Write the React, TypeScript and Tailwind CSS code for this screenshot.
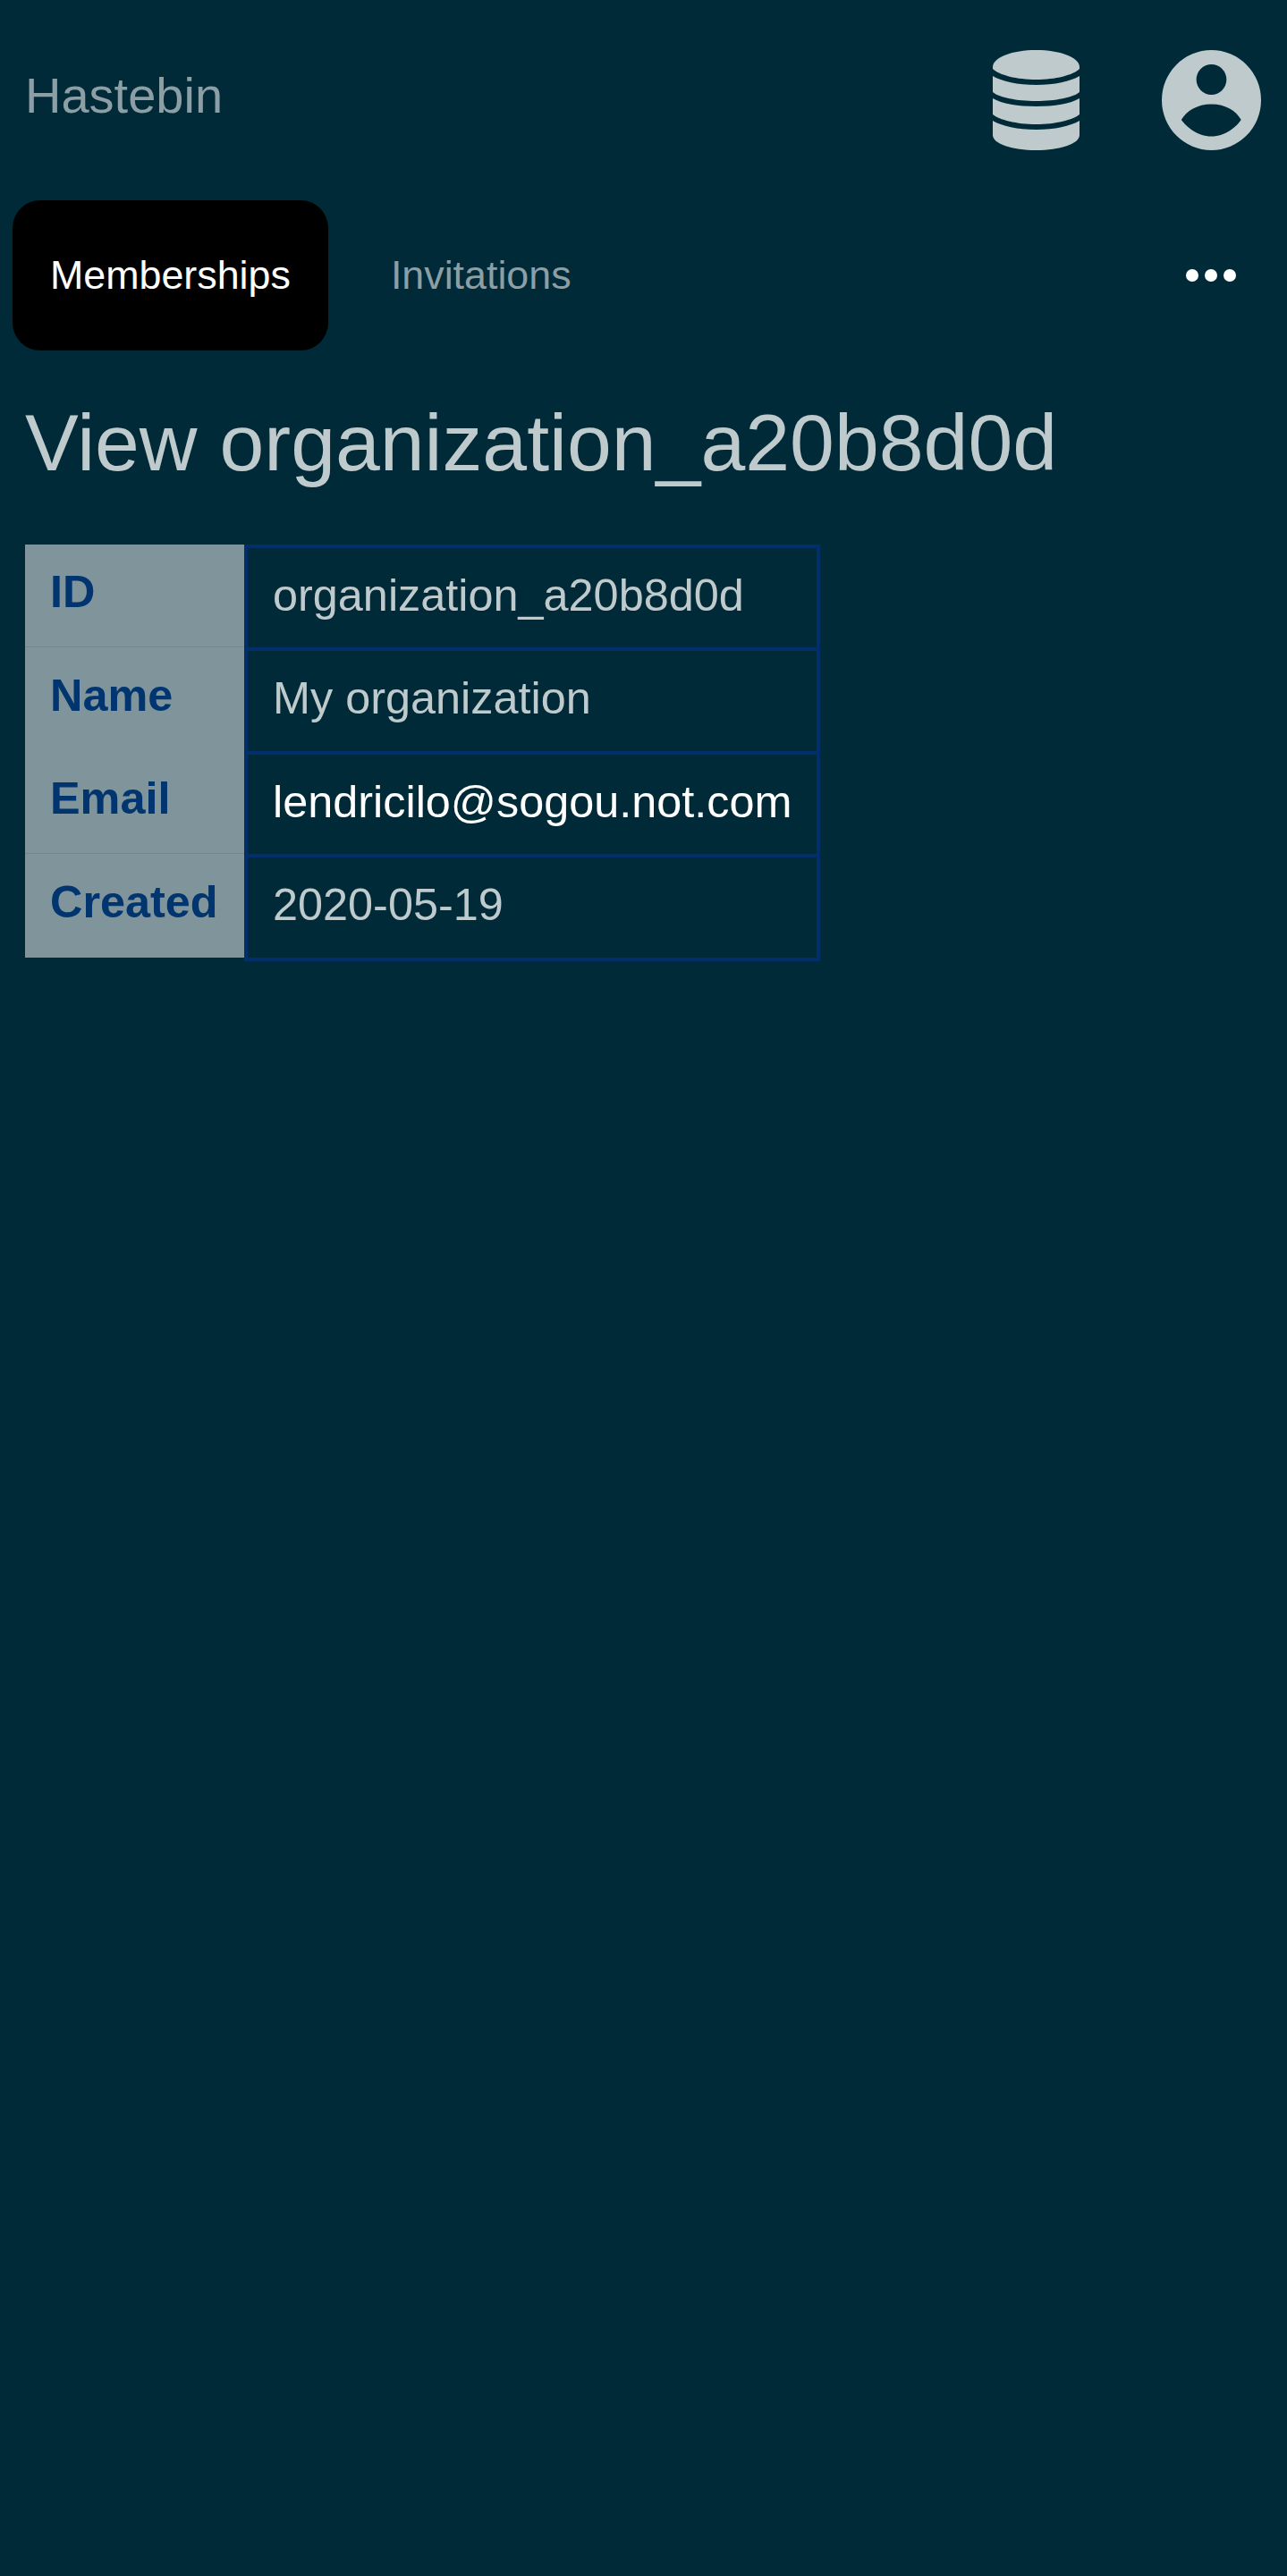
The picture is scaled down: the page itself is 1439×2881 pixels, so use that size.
const rows = [
  { label: "ID", value: "organization_a20b8d0d", height: "h-[115px] pt-[23px]", line: "border-b border-[#73878e]", cell: "h-[115px]" },
  { label: "Name", value: "My organization", height: "h-[116px] pt-[24px]", line: "", cell: "h-[116px]" },
  { label: "Email", value: "lendricilo@sogou.not.com", height: "h-[115px] pt-[23px]", line: "border-b border-[#73878e]", cell: "h-[115px]", link: true },
  { label: "Created", value: "2020-05-19", height: "h-[116px] pt-[24px]", line: "", cell: "h-[112px]" },
];

function DatabaseIcon() {
  return (
    <svg viewBox="0 0 97 112" className="h-[112px] w-[97px] fill-[#bfcacd]">
      <path d="M0 19C0 8 22 0 48.500 0S97 8 97 19V21C90 28 70 33 48.500 33S7 28 0 21Z" />
      <path d="M0 29C10 35 28 39 48.500 39S87 35 97 29V47C90 53 70 57 48.500 57S7 53 0 47Z" />
      <path d="M0 54C10 60 28 63 48.500 63S87 60 97 54V72C90 78 70 83 48.500 83S7 78 0 72Z" />
      <path d="M0 79C10 85 28 89 48.500 89S87 85 97 79V95C97 105 75 112 48.500 112S0 105 0 95Z" />
    </svg>
  );
}

function UserIcon() {
  return (
    <svg viewBox="0 0 112 112" preserveAspectRatio="none" className="h-[112px] w-[111px] fill-[#bfcacd]">
      <path
        fillRule="evenodd"
        d="M56 0A56 56 0 1 1 56 112A56 56 0 1 1 56 0ZM56 16A17 17 0 1 0 56 50A17 17 0 1 0 56 16ZM22 78C28 86 40 96.500 56 96.500S84 86 89.500 78C84 68 72 60.500 56 60.500S28 68 22 78Z"
      />
    </svg>
  );
}

function DotsIcon() {
  return (
    <svg viewBox="0 0 56 14" className="h-[14px] w-[56px] fill-white">
      <circle cx="7" cy="7" r="7" />
      <circle cx="28" cy="7" r="7" />
      <circle cx="49" cy="7" r="7" />
    </svg>
  );
}

export default function App() {
  return (
    <div className="min-h-screen bg-[#002a38] [font-family:'Liberation_Sans',sans-serif] leading-[normal] text-[#bfcacd]">
      {/* Header */}
      <header className="flex items-center justify-between pl-[28px] pr-[29px] py-[56px]">
        <a className="mb-[12px] text-[56px] text-[#8c9fa5]">Hastebin</a>
        <div className="flex items-center gap-[92px]">
          <DatabaseIcon />
          <UserIcon />
        </div>
      </header>

      {/* Tabs */}
      <nav className="flex h-[168px] items-center justify-between pl-[14px] pr-[57px] text-[44.8px]">
        <div className="flex items-center gap-[28px]">
          <a className="flex h-[168px] items-center rounded-[31px] bg-black px-[42px] pb-[2px] text-white">Memberships</a>
          <a className="px-[42px] pb-[2px] text-[#8c9fa5]">Invitations</a>
        </div>
        <DotsIcon />
      </nav>

      <main className="px-[28px]">
        <h1 className="mt-[52px] mb-[62px] text-[89.6px] font-normal">View organization_a20b8d0d</h1>

        {/* Details */}
        <div className="flex items-start text-[50.4px]">
          <div className="w-[245px] bg-[#80949b] font-bold text-[#00356f]">
            {rows.map((row) => (
              <div key={row.label} className={`${row.height} ${row.line} pl-[28px]`}>
                {row.label}
              </div>
            ))}
          </div>
          <div className="w-[644px] divide-y-4 divide-[#002f6c] border-4 border-[#002f6c]">
            {rows.map((row) => (
              <div
                key={row.label}
                className={`${row.cell} px-[28px] pt-[23px] ${row.link ? "text-white" : ""}`}
              >
                {row.value}
              </div>
            ))}
          </div>
        </div>
      </main>
    </div>
  );
}
